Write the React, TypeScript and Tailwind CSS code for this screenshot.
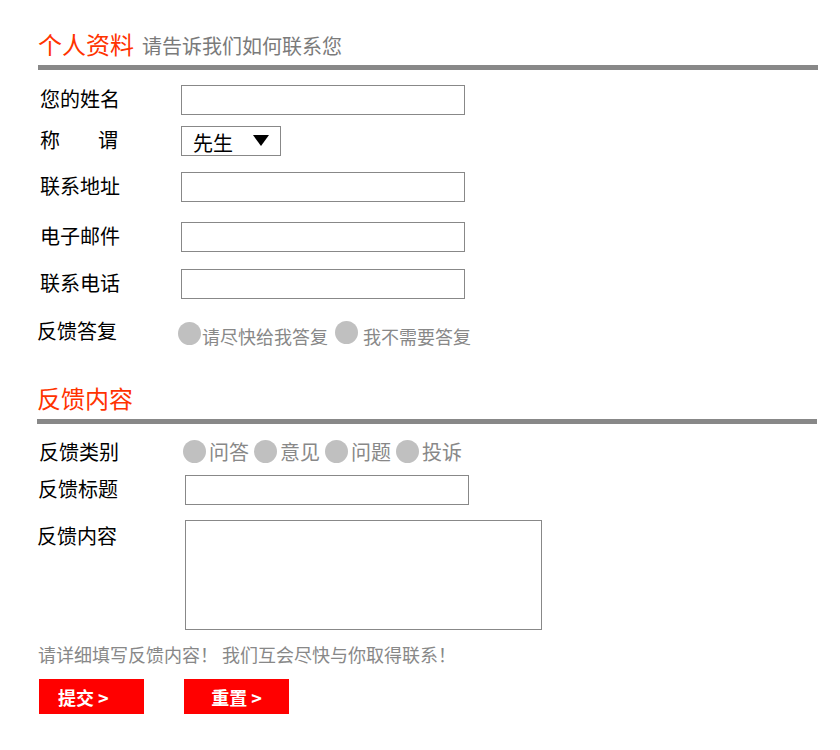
import React from "react";

const font = { fontFamily: '"Noto Sans CJK SC", "Noto Sans", sans-serif' };

const Field = ({ label, mt, children, labelClass = "" }: { label: React.ReactNode; mt: string; children: React.ReactNode; labelClass?: string }) => (
  <div className={`flex items-center ${mt}`}>
    <div className={`w-[143px] pl-[2px] pb-[3px] text-[20px] leading-none text-black ${labelClass}`}>{label}</div>
    {children}
  </div>
);

const TextBox = () => (
  <input type="text" className="w-[284px] h-[30px] border border-[#888] bg-white outline-none px-2" />
);

const Dot = () => <span className="inline-block w-[23px] h-[23px] rounded-full bg-[#c0c0c0]" />;

const SectionTitle = ({ title, sub }: { title: string; sub?: string }) => (
  <div>
    <div className="flex items-end h-[24px]">
      <h2 className="text-[24px] leading-none text-[#ff3300]">{title}</h2>
      {sub && <span className="ml-[8px] text-[20px] leading-none text-[#7a7a7a]">{sub}</span>}
    </div>
    <div className="mt-[9px] h-[5px] w-[780px] bg-[#888]" />
  </div>
);

export default function App() {
  const kinds = ["问答", "意见", "问题", "投诉"];

  return (
    <div className="min-h-screen bg-white pt-[32px] pl-[38px]" style={font}>
      {/* 个人资料 */}
      <SectionTitle title="个人资料" sub="请告诉我们如何联系您" />

      <Field label="您的姓名" mt="mt-[15px]">
        <TextBox />
      </Field>

      <Field
        label={
          <span className="flex w-[78px] justify-between">
            <span>称</span>
            <span>谓</span>
          </span>
        }
        mt="mt-[11px]"
      >
        <div className="flex items-center w-[100px] h-[30px] border border-[#888] pl-[11px]">
          <span className="text-[20px] leading-none text-black mt-[3px]">先生</span>
          <svg className="ml-[20px]" width="16" height="12" viewBox="0 0 16 12">
            <polygon points="0,0 16,0 8,11" fill="#000" />
          </svg>
        </div>
      </Field>

      <Field label="联系地址" mt="mt-[16px]">
        <TextBox />
      </Field>

      <Field label="电子邮件" mt="mt-[20px]" labelClass="pl-[1px]">
        <TextBox />
      </Field>

      <Field label="联系电话" mt="mt-[17px]" labelClass="pl-0">
        <TextBox />
      </Field>

      <div className="flex items-start mt-[22px]">
        <div className="w-[140px] text-[20px] leading-none text-black -ml-[1px] mr-[1px]">反馈答复</div>
        <div className="flex items-center text-[18px] leading-none text-[#888]">
          <Dot />
          <span className="ml-[1px] mt-[5px]">请尽快给我答复</span>
          <span className="ml-[7px]"><Dot /></span>
          <span className="ml-[5px] mt-[5px]">我不需要答复</span>
        </div>
      </div>

      {/* 反馈内容 */}
      <div className="mt-[41px] -ml-[1px]">
        <SectionTitle title="反馈内容" />
      </div>

      <div className="flex items-center mt-[16px]">
        <div className="w-[145px] pl-[1px] text-[20px] leading-none text-black">反馈类别</div>
        <div className="flex items-center text-[20px] leading-none text-[#888]">
          {kinds.map((k, i) => (
            <span key={k} className={`flex items-center ${i > 0 ? "ml-[5px]" : ""}`}>
              <Dot />
              <span className="ml-[3px]">{k}</span>
            </span>
          ))}
        </div>
      </div>

      <div className="flex items-center mt-[12px]">
        <div className="w-[147px] pb-[2px] text-[20px] leading-none text-black">反馈标题</div>
        <TextBox />
      </div>

      <div className="flex items-start mt-[15px]">
        <div className="w-[147px] pt-[6px] text-[20px] leading-none text-black -ml-[1px] mr-[1px]">反馈内容</div>
        <textarea className="w-[357px] h-[110px] border border-[#888] bg-white outline-none resize-none p-1" />
      </div>

      <p className="mt-[15px] text-[18px] leading-none text-[#888]">请详细填写反馈内容！ 我们互会尽快与你取得联系！</p>

      <div className="flex mt-[16px] ml-[1px] gap-[40px]">
        <button className="w-[105px] h-[35px] bg-[#ff0000] text-white text-[18px] font-bold leading-none text-left pl-[19px]">
          提交 &gt;
        </button>
        <button className="w-[105px] h-[35px] bg-[#ff0000] text-white text-[18px] font-bold leading-none text-center">
          重置 &gt;
        </button>
      </div>
    </div>
  );
}
